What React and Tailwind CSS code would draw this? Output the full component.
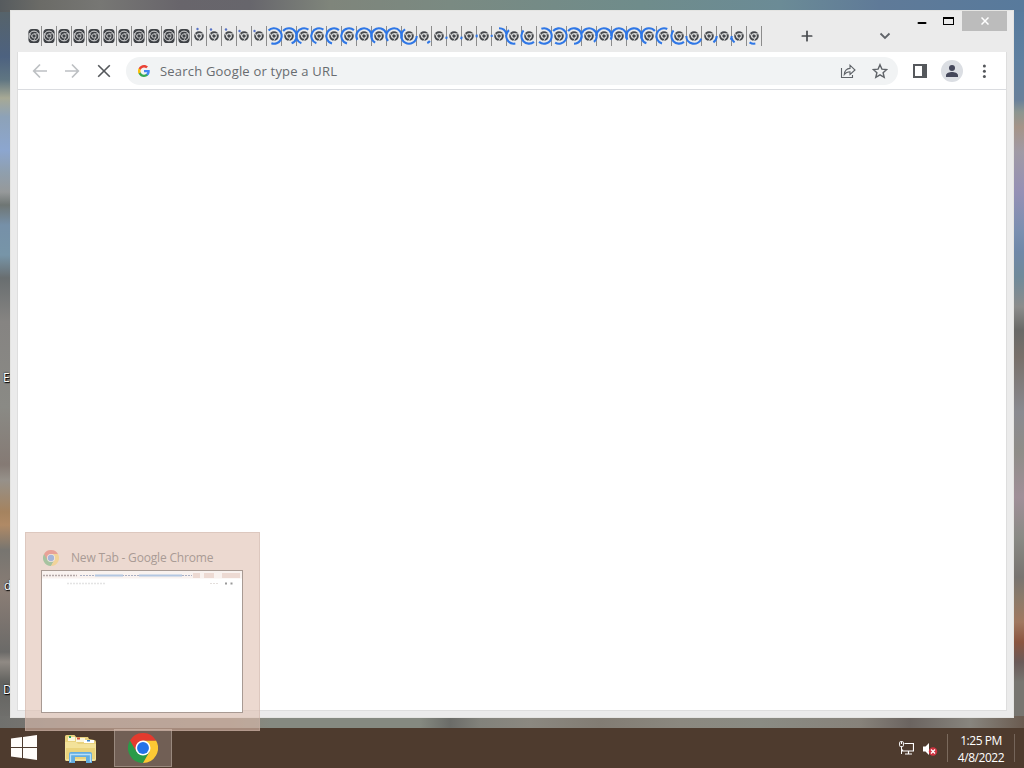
import { Minus, Plus } from 'lucide-react';

// Angles in degrees, clockwise from 12 o'clock
const TABS = [
  ...Array.from({ length: 11 }, () => ({ large: true })),
  { dot: [-1.5, -7] },
  { dot: [-3, -6.5] },
  { dot: [-3, -6.5] },
  { dot: [-4.5, -5] },
  { dot: [-4.5, -5] },
  { arc: [-45, 200] },
  { arc: [-50, 160] },
  { arc: [-160, 35] },
  { arc: [-160, 35] },
  { arc: [-165, 40] },
  { arc: [-165, 40] },
  { arc: [-120, 100] },
  { arc: [-150, 70] },
  { arc: [-130, 110] },
  { arc: [90, 330] },
  { arc: [130, 155] },
  { arc: [95, 112] },
  { arc: [95, 115] },
  { arc: [80, 100] },
  { arc: [82, 96] },
  { arc: [0, 75] },
  { arc: [170, 320] },
  { arc: [140, 315] },
  { arc: [-20, 220] },
  { arc: [-50, 210] },
  { arc: [-50, 180] },
  { arc: [-70, 140] },
  { arc: [-90, 120] },
  { arc: [-90, 110] },
  { arc: [-120, 110] },
  { arc: [-160, 50] },
  { arc: [-165, 25] },
  { arc: [140, 315] },
  { arc: [110, 270] },
  { arc: [90, 145] },
  { arc: [90, 120] },
  { arc: [215, 255] },
  { arc: [170, 215] },
];

function arcPath([start, end], r = 7.7) {
  const point = (deg) => {
    const rad = ((deg - 90) * Math.PI) / 180;
    return `${(8 + r * Math.cos(rad)).toFixed(2)} ${(10 + r * Math.sin(rad)).toFixed(2)}`;
  };
  return `M${point(start)} A${r} ${r} 0 ${end - start > 180 ? 1 : 0} 1 ${point(end)}`;
}

function MonoChrome() {
  return (
    <g>
      <circle cx="8" cy="10" r="3.8" fill="none" stroke="#45484c" strokeWidth="2" />
      <circle cx="8" cy="10" r="1.8" fill="#45484c" />
      <path d="M8 7.8h4.6M6.1 11.1l-2.3-4M9.9 11.1l-2.3 4" stroke="#ebebeb" strokeWidth="0.8" />
    </g>
  );
}

function LargeMonoChrome() {
  return (
    <g>
      <rect x="2.4" y="3" width="11.2" height="14" rx="3.6" fill="#3f4246" />
      <circle cx="8" cy="10" r="4.9" fill="none" stroke="#ebebeb" strokeWidth="0.9" />
      <circle cx="8" cy="10" r="2.1" fill="none" stroke="#ebebeb" strokeWidth="0.7" />
      <path d="M8 7.8h4.6M6.1 11.1l-2.3-4M9.9 11.1l-2.3 4" stroke="#ebebeb" strokeWidth="0.6" />
    </g>
  );
}

function Tab({ tab }) {
  return (
    <div className="flex h-5 w-[15px] shrink-0 border-r border-[#8c8c8c]">
      <svg className="-ml-px h-5 w-4 shrink-0 overflow-visible" viewBox="0 0 16 20">
        {tab.large ? <LargeMonoChrome /> : <MonoChrome />}
        {tab.dot && (
          <circle cx={8 + tab.dot[0]} cy={10 + tab.dot[1]} r="1.2" fill="#5873c4" />
        )}
        {tab.arc && <path d={arcPath(tab.arc)} fill="none" stroke="#2f77e6" strokeWidth="2.1" />}
      </svg>
    </div>
  );
}

function ChromeLogo({ className }) {
  return (
    <svg className={className} viewBox="0 0 48 48">
      <path d="M24 24L34.4 30 24 48A24 24 0 0 1 3.2 12z" fill="#2a9b48" />
      <path d="M24 12h20.8A24 24 0 0 1 24 48l10.4-18z" fill="#fcc934" />
      <path d="M3.2 12A24 24 0 0 1 44.8 12H24L13.6 30z" fill="#e33b2e" />
      <circle cx="24" cy="24" r="12" fill="#fff" />
      <circle cx="24" cy="24" r="9.5" fill="#2472e8" />
    </svg>
  );
}

function GoogleG() {
  return (
    <svg className="h-3 w-3" viewBox="0 0 48 48">
      <path fill="#4285f4" d="M47 24.5c0-1.6-.1-3.1-.4-4.5H24v9h13c-.6 3-2.3 5.5-4.8 7.2v6h7.7C44.4 38 47 31.8 47 24.5z" />
      <path fill="#34a853" d="M24 48c6.5 0 11.9-2.1 15.9-5.8l-7.7-6c-2.2 1.4-4.9 2.3-8.2 2.3-6.2 0-11.5-4.2-13.4-9.9H2.7v6.2C6.6 42.6 14.7 48 24 48z" />
      <path fill="#fbbc05" d="M10.6 28.6A14.5 14.5 0 0 1 10.6 19.4v-6.2H2.7a24 24 0 0 0 0 21.6z" />
      <path fill="#ea4335" d="M24 9.5c3.5 0 6.6 1.2 9.1 3.6l6.8-6.8C35.9 2.4 30.5 0 24 0 14.7 0 6.6 5.4 2.7 13.2l7.9 6.2C12.5 13.7 17.8 9.5 24 9.5z" />
    </svg>
  );
}

function Wallpaper() {
  return (
    <div className="absolute inset-0 flex flex-col bg-[#7c7b76]">
      <div className="h-3 shrink-0 bg-[linear-gradient(to_right,#565b5e_0,#6b6b67_40px,#777774_100px,#68656b_180px,#67666c_250px,#7f857b_330px,#7a8a82_450px,#6f8c8b_640px,#6b8b96_780px,#5f7a98_880px,#587a9c_1024px)]" />
      <div className="flex flex-1 justify-between">
        <div className="w-3 bg-[linear-gradient(to_bottom,#56636a_0,#4d6280_45px,#607682_68px,#a7a995_86px,#8da2b8_105px,#8ca6cf_138px,#8f9fae_160px,#96999a_180px,#6f7674_193px,#7690a8_213px,#7795a8_243px,#696e70_266px,#868482_310px,#8a8a85_395px,#857a74_453px,#96918a_468px,#a5835f_500px,#b08a66_513px,#777570_538px,#8a7d75_580px,#6b6a68_640px,#908a84_650px,#62625f_670px,#747370_716px)]" />
        <div className="w-3 bg-[linear-gradient(to_bottom,#587b9e_0,#5f80a0_50px,#69809a_88px,#8c9590_100px,#a59488_115px,#a09aa5_140px,#9590b5_180px,#7a8fb0_220px,#7088a8_240px,#708a9a_265px,#8c8c8b_295px,#696967_318px,#78706a_345px,#8a8a90_400px,#8f8d88_440px,#a08f98_485px,#8a8a85_525px,#787470_565px,#8a7a6a_585px,#a07860_610px,#8a5540_630px,#6a5a58_650px,#777570_670px,#777570_716px)]" />
      </div>
      <div className="h-[52px] shrink-0 bg-[linear-gradient(to_right,#70706d_0,#817b74_100px,#8a8176_230px,#858980_270px,#858980_420px,#6b6c68_450px,#82827b_480px,#8b8880_530px,#827c73_600px,#8b887f_680px,#8a8b83_760px,#87827a_860px,#6b6460_910px,#88857e_970px,#6a5b50_1024px)]" />
    </div>
  );
}

function TitleBar() {
  return (
    <div className="flex h-[42px] shrink-0">
      <div className="flex items-start pt-4 pl-[9px]">
        {TABS.map((tab, i) => (
          <Tab key={i} tab={tab} />
        ))}
      </div>
      <div className="flex flex-1 items-start justify-between pt-[18px] pr-6 pl-[37px]">
        <Plus className="h-4 w-4 text-[#484b4f]" strokeWidth={2.6} />
        <svg className="mt-[3px] h-2.5 w-3.5" viewBox="0 0 14 10">
          <path d="M2.5 2.5L7 7l4.5-4.5" fill="none" stroke="#5f6368" strokeWidth="1.8" />
        </svg>
      </div>
      <div className="flex h-[21px] shrink-0 items-center pt-px">
        <Minus className="mt-1 h-3 w-3 text-black" strokeWidth={4} />
        <div className="ml-[15px] h-2 w-[11px] border border-t-2 border-black" />
        <div className="ml-2 flex h-5 w-[45px] items-center justify-center bg-[#bcbcbc]">
          <svg className="h-2 w-2" viewBox="0 0 8 8">
            <path d="M.5.5l7 7M7.5.5l-7 7" stroke="#fff" strokeWidth="1.5" />
          </svg>
        </div>
      </div>
    </div>
  );
}

function Toolbar() {
  return (
    <div className="flex h-[38px] shrink-0 items-center border-b border-[#dadce0] bg-white pl-[14px]">
      <svg className="h-4 w-4" viewBox="0 0 16 16" fill="none" stroke="#bdc0c3" strokeWidth="1.7">
        <path d="M15 8H2M8 1.5L1.7 8 8 14.5" />
      </svg>
      <svg className="ml-4 h-4 w-4" viewBox="0 0 16 16" fill="none" stroke="#bdc0c3" strokeWidth="1.7">
        <path d="M1 8h13M8 1.5L14.3 8 8 14.5" />
      </svg>
      <svg className="ml-4 h-4 w-4" viewBox="0 0 16 16">
        <path d="M2.2 2.2l11.6 11.6M13.8 2.2L2.2 13.8" stroke="#54575b" strokeWidth="1.6" />
      </svg>
      <div className="ml-[14px] flex h-7 w-[772px] items-center rounded-full bg-[#f1f3f4] pr-[10px] pl-3">
        <GoogleG />
        <span className="ml-[10px] flex-1 pt-0.5 text-[13px] tracking-[0.2px] whitespace-nowrap text-[#686c70]">
          Search Google or type a URL
        </span>
        <svg className="h-4 w-4" viewBox="0 0 16 16" fill="none" stroke="#5f6368" strokeWidth="1.1">
          <path d="M1.5 5v9.5h11V12" />
          <path d="M4.3 11.5c.3-3.7 2.2-5.8 5.7-6.1V2.2l5 4.8-5 4.5V8.7c-2.5 0-4.3.8-5.7 2.8z" />
        </svg>
        <svg className="ml-4 h-4 w-4" viewBox="0 0 16 16">
          <path d="M8 1.7l1.9 4.4 4.8.4-3.6 3.2 1.1 4.7L8 11.9l-4.2 2.5 1.1-4.7-3.6-3.2 4.8-.4z" fill="none" stroke="#5f6368" strokeWidth="1.4" />
        </svg>
      </div>
      <div className="ml-[15px] flex h-[14px] w-[14px] justify-end border-2 border-[#55585c]">
        <div className="w-[3px] bg-[#55585c]" />
      </div>
      <div className="ml-[14px] flex h-[22px] w-[22px] items-center justify-center rounded-full bg-[#dbdee3]">
        <svg className="h-3 w-3" viewBox="0 0 12 12" fill="#44475a">
          <circle cx="6" cy="3" r="3" />
          <path d="M0 12v-1.6C0 8.2 3.5 7 6 7s6 1.2 6 3.4V12z" />
        </svg>
      </div>
      <svg className="ml-[13px] h-4 w-4" viewBox="0 0 16 16" fill="#54575b">
        <circle cx="8.4" cy="3" r="1.5" />
        <circle cx="8.4" cy="8.2" r="1.5" />
        <circle cx="8.4" cy="13.4" r="1.5" />
      </svg>
    </div>
  );
}

function BrowserWindow() {
  return (
    <div className="relative mx-[10px] mt-[10px] flex h-[708px] shrink-0 flex-col border border-[#e4e4e2] bg-[#ebebeb] pr-[6px] pb-[6px] pl-[7px]">
      <div className="-mt-px flex flex-1 flex-col">
        <TitleBar />
        <div className="-ml-px flex flex-1 flex-col border-r border-b border-l border-[#dedede] bg-white">
          <Toolbar />
        </div>
      </div>
    </div>
  );
}

function DesktopLabel({ className, children }) {
  return (
    <span
      className={`absolute w-[10px] overflow-hidden text-[12px] leading-4 text-white [text-shadow:1px_1px_1px_#000,0_0_2px_#000] ${className}`}
    >
      {children}
    </span>
  );
}

function PreviewThumb() {
  return (
    <svg className="h-[143px] w-[202px] border border-[#a89a93] bg-white" viewBox="0 0 200 141">
      <rect width="200" height="7.5" fill="#f9f2ef" />
      <path d="M1 4.5h34" stroke="#b4a8a8" strokeWidth="1.6" strokeDasharray="2 1" />
      <path d="M38 4.5h15M80 4.5h17M140 4.5h10" stroke="#aab0c4" strokeWidth="1.2" strokeDasharray="2 1" />
      <path d="M53 4.5h28M97 4.5h43" stroke="#b4c7e2" strokeWidth="2" />
      <path d="M151 4.5h7M162 4.5h10M180 4.5h18" stroke="#eddad3" strokeWidth="5" />
      <path d="M25 12.5h38" stroke="#e4e4e4" strokeWidth="1.5" strokeDasharray="2 1" />
      <path d="M168 12.5h8" stroke="#e4dfdc" strokeDasharray="2 1" />
      <path d="M183 12.5h2M188.5 12.5h2" stroke="#999" strokeWidth="2" />
    </svg>
  );
}

function TaskbarPreview() {
  return (
    <div className="absolute top-[532px] left-[25px] flex h-[199px] w-[235px] flex-col border border-[#c9b0a5]/40 bg-[#dfc0b1]/60 px-[15px] pt-[17px]">
      <div className="flex h-5 items-start">
        <ChromeLogo className="ml-[2px] h-4 w-4 opacity-35" />
        <span className="ml-3 text-[12px] leading-4 tracking-[-0.18px] whitespace-nowrap text-[#a99b95]">
          New Tab - Google Chrome
        </span>
      </div>
      <PreviewThumb />
    </div>
  );
}

function ExplorerIcon() {
  return (
    <svg className="h-[30px] w-[33px]" viewBox="0 0 33 30">
      <path d="M1 2.5Q1 1 2.5 1h8l1.5 2h12l1 2 5 1q2 0 2 2v17q0 2-2 2H3q-2 0-2-2z" fill="#e9d27e" />
      <path d="M4 3h7v4H4z" fill="#fbf6dc" />
      <path d="M5 2h2v2H5z" fill="#2ea05b" />
      <path d="M12 4h9v4h-9z" fill="#fbf6dc" />
      <path d="M13 3.5h3v2h-3z" fill="#d5553d" />
      <path d="M20 6h10v3H20z" fill="#fff" />
      <path d="M23 6h3v1.5h-3z" fill="#3c86c8" />
      <path d="M1 8h11l2 2h18v15q0 2-2 2H3q-2 0-2-2z" fill="#f3e29a" />
      <path d="M2 14h29v11H2z" fill="#ead37c" />
      <path d="M5 29V20q0-2 2-2h19q2 0 2 2v9h-6v-6H11v6z" fill="#62ade0" />
      <path d="M6.5 28v-7.5h20V28" fill="none" stroke="#b7dff8" strokeWidth="1.3" />
    </svg>
  );
}

function Taskbar() {
  return (
    <div className="relative mt-[10px] flex h-10 shrink-0 bg-[#4e3b2e] text-white">
      <div className="flex w-12 items-center pl-[11px]">
        <svg className="-mt-px h-[25px] w-[26px]" viewBox="0 0 26 25" fill="#fffdfa">
          <path d="M0 3.6l11-1.5v9.9H0zM12 1.9L26 0v12H12zM0 13h11v9.9L0 21.4zM12 13h14v12l-14-1.900z" />
        </svg>
      </div>
      <div className="flex w-[66px] items-center pt-0.5 pl-4">
        <ExplorerIcon />
      </div>
      <div className="mt-px flex h-[38px] w-[58px] items-center justify-center border border-[#99897e] bg-[#715f55]">
        <ChromeLogo className="h-[30px] w-[30px]" />
      </div>
      <div className="ml-auto flex items-center">
        <svg className="h-[14px] w-[15px]" viewBox="0 0 15 14" fill="none" stroke="#fff">
          <path d="M5.5 2.5h9v7.5H3.5V8.5M9.5 10v2.5M6 13h7" strokeWidth="1.2" />
          <rect x=".6" y=".6" width="3.8" height="5" rx="1" />
          <path d="M2.5 5.5v7.5M2.5 1v2" />
        </svg>
        <svg className="mt-0.5 ml-2 h-[14px] w-4" viewBox="0 0 16 14">
          <path d="M1 4.5h2.5L7 1v12L3.5 9.5H1z" fill="#fff" />
          <circle cx="11" cy="9.5" r="4.2" fill="#cf3440" />
          <path d="M9 7.5l4 4M13 7.5l-4 4" stroke="#fff" strokeWidth="1.3" />
        </svg>
        <div className="ml-[9px] h-[28px] w-px bg-[#7b6a5d]" />
        <div className="flex w-[66px] flex-col items-center pt-px text-[12px] leading-[17px] tracking-[-0.45px]">
          <span>1:25 PM</span>
          <span>4/8/2022</span>
        </div>
        <div className="mr-[9px] h-[28px] w-px bg-[#75655a]" />
      </div>
    </div>
  );
}

export default function App() {
  return (
    <div className="relative flex h-[768px] w-[1024px] flex-col overflow-hidden font-['Open_Sans','Noto_Sans',sans-serif]">
      <Wallpaper />
      <DesktopLabel className="top-[370px] left-[3px]">E</DesktopLabel>
      <DesktopLabel className="top-[578px] left-[4px]">d</DesktopLabel>
      <DesktopLabel className="top-[682px] left-[3px]">D</DesktopLabel>
      <BrowserWindow />
      <Taskbar />
      <TaskbarPreview />
    </div>
  );
}
